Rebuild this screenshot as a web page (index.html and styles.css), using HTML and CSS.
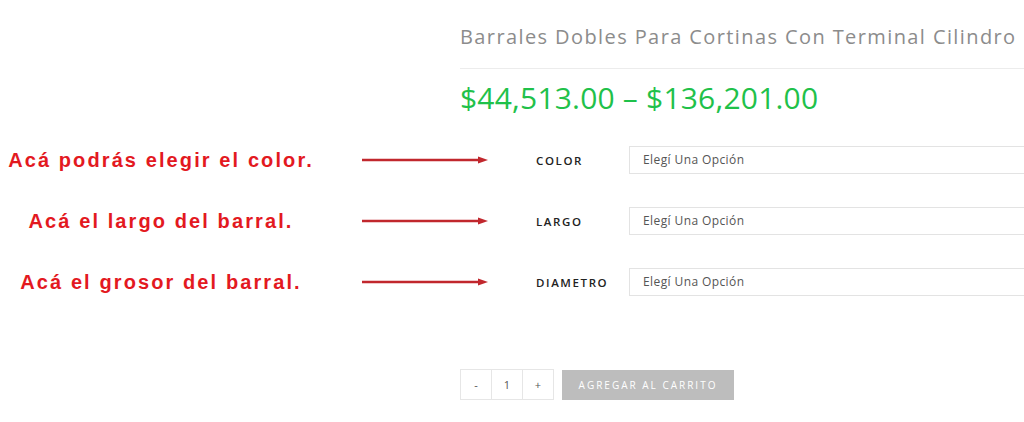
FILE: index.html
```html
<!DOCTYPE html>
<html lang="es">
<head>
<meta charset="utf-8">
<title>Barrales Dobles</title>
<link rel="stylesheet" href="styles.css">
</head>
<body>
<div class="page">
  <header class="summary">
    <h1 class="title">Barrales Dobles Para Cortinas Con Terminal Cilindro</h1>
    <p class="price">$44,513.00 – $136,201.00</p>
  </header>

  <div class="variations">
    <div class="row">
      <p class="note">Acá podrás elegir el color.</p>
      <svg class="arrow" width="126" height="8" viewBox="0 0 126 8"><line x1="0" y1="4" x2="118" y2="4" stroke="#c1272d" stroke-width="2.4"/><polygon points="116,0.5 126,4 116,7.5" fill="#c1272d"/></svg>
      <span class="label">COLOR</span>
      <div class="select">Elegí Una Opción</div>
    </div>
    <div class="row">
      <p class="note">Acá el largo del barral.</p>
      <svg class="arrow" width="126" height="8" viewBox="0 0 126 8"><line x1="0" y1="4" x2="118" y2="4" stroke="#c1272d" stroke-width="2.4"/><polygon points="116,0.5 126,4 116,7.5" fill="#c1272d"/></svg>
      <span class="label">LARGO</span>
      <div class="select">Elegí Una Opción</div>
    </div>
    <div class="row">
      <p class="note">Acá el grosor del barral.</p>
      <svg class="arrow" width="126" height="8" viewBox="0 0 126 8"><line x1="0" y1="4" x2="118" y2="4" stroke="#c1272d" stroke-width="2.4"/><polygon points="116,0.5 126,4 116,7.5" fill="#c1272d"/></svg>
      <span class="label">DIAMETRO</span>
      <div class="select">Elegí Una Opción</div>
    </div>
  </div>

  <div class="cart">
    <div class="qty">
      <span class="qcell">-</span>
      <span class="qcell">1</span>
      <span class="qcell">+</span>
    </div>
    <button class="add">AGREGAR AL CARRITO</button>
  </div>
</div>
</body>
</html>
```

FILE: styles.css
```css
html, body {
  margin: 0;
  padding: 0;
  background: #ffffff;
  overflow: hidden;
}
body {
  width: 1024px;
  height: 422px;
  font-family: "Open Sans", "Noto Sans", sans-serif;
}
.page {
  padding-top: 25px;
}
.summary {
  margin-left: 460px;
}
.title {
  margin: 0;
  font-size: 20px;
  line-height: 24px;
  font-weight: 400;
  color: #8c8c8c;
  letter-spacing: 1.4px;
  white-space: nowrap;
  padding-bottom: 19px;
  border-bottom: 1px solid #ececec;
}
.price {
  margin: 11px 0 0 0;
  font-size: 30px;
  line-height: 36px;
  color: #1fc14a;
  letter-spacing: 0.2px;
  white-space: nowrap;
}
.variations {
  margin-top: 30px;
  display: flex;
  flex-direction: column;
  gap: 33px;
}
.row {
  display: flex;
  align-items: center;
  height: 28px;
}
.row > * {
  flex: none;
}
.note {
  margin: 0;
  width: 322px;
  text-align: center;
  font-family: "Liberation Sans", Arial, sans-serif;
  font-weight: 700;
  font-size: 20px;
  letter-spacing: 2.1px;
  color: #e3191f;
  white-space: nowrap;
}
.arrow {
  margin-left: 40px;
}
.label {
  margin-left: 48px;
  width: 93px;
  font-size: 11.5px;
  font-weight: 600;
  letter-spacing: 1.6px;
  color: #222;
}
.select {
  box-sizing: border-box;
  width: 420px;
  height: 28px;
  border: 1px solid #e3e3e3;
  padding-left: 13px;
  font-size: 12px;
  line-height: 26px;
  color: #555;
  letter-spacing: 0.4px;
}
.cart {
  margin-left: 460px;
  margin-top: 73px;
  display: flex;
  align-items: center;
  gap: 8px;
}
.qty {
  display: flex;
  border: 1px solid #e6e6e6;
}
.qcell {
  width: 30px;
  height: 29px;
  line-height: 29px;
  text-align: center;
  font-size: 11px;
  color: #555;
}
.qcell + .qcell {
  border-left: 1px solid #e6e6e6;
}
.add {
  width: 172px;
  height: 30px;
  border: none;
  background: #bdbdbd;
  color: #ffffff;
  font-family: "Open Sans", "Noto Sans", sans-serif;
  font-size: 10px;
  letter-spacing: 2px;
  padding: 0;
}
```
